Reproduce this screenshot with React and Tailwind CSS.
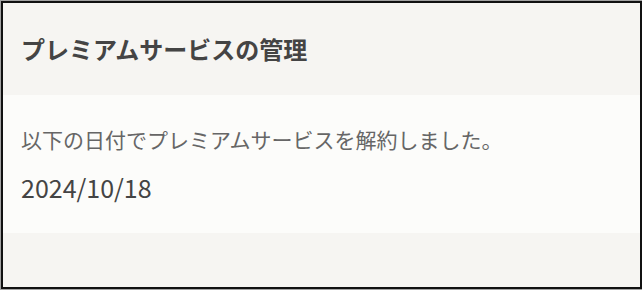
import React from 'react';

const jp = { fontFamily: '"Noto Sans CJK JP", "Noto Sans", sans-serif' };

export default function App() {
  return (
    <div className="w-[642px] h-[290px] border-t border-l border-b border-[#a3a3a3] bg-white" style={jp}>
      <div className="flex h-full w-[641px] flex-col border-2 border-[#111111]">
        <div className="flex h-[92px] items-center bg-[#f6f5f2] px-[18px]">
          <h2 className="text-[24px] font-bold leading-none text-[#444444]">プレミアムサービスの管理</h2>
        </div>
        <div className="bg-[#fcfcfa] px-[18px] pt-[28px] pb-[28px]">
          <p className="text-[21px] leading-[32px] text-[#666666]">以下の日付でプレミアムサービスを解約しました。</p>
          <p className="mt-[14px] text-[25px] leading-[36px] text-[#444444]">2024/10/18</p>
        </div>
        <div className="flex-1 bg-[#f6f5f2]" />
      </div>
    </div>
  );
}
